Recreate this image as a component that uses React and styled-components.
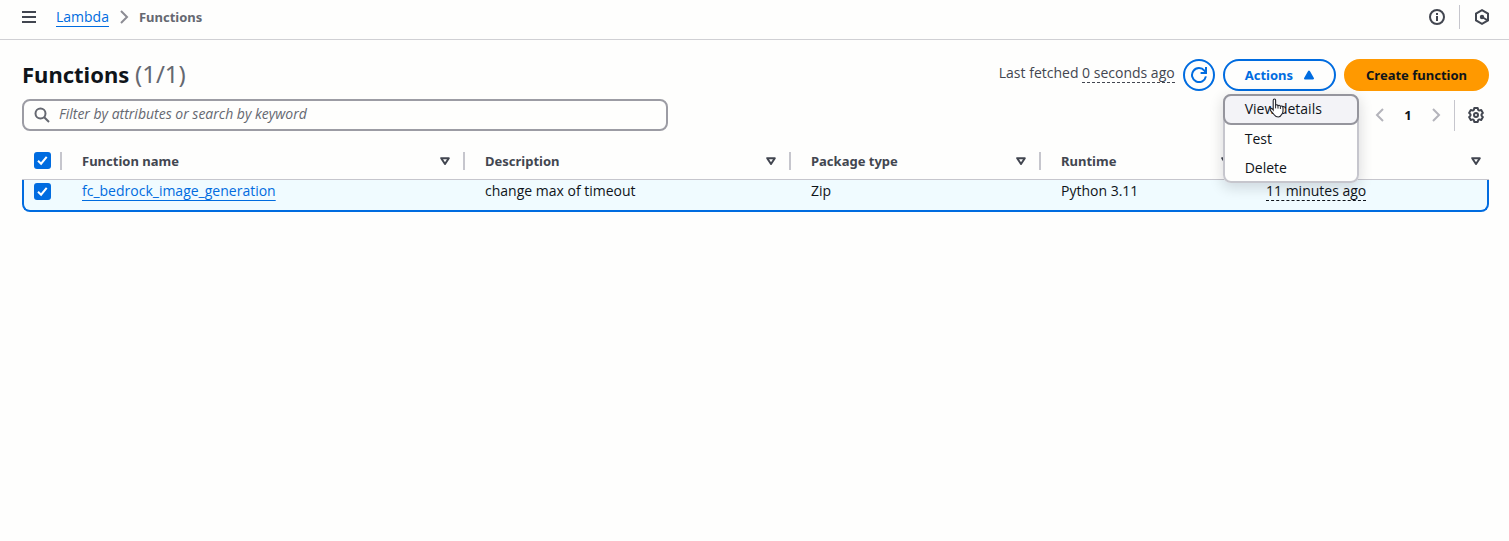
import React from "react";
import styled, { createGlobalStyle, css } from "styled-components";

const GlobalStyle = createGlobalStyle`
  * { box-sizing: border-box; }
  body {
    margin: 0;
    background: #fefefd;
    color: #16191f;
    font-family: "Open Sans", "Noto Sans", sans-serif;
    font-size: 14px;
    line-height: 20px;
  }
  button, input { font: inherit; color: inherit; }
`;

const BLUE = "#006ce0";

const strong = css`
  font-family: "Noto Sans", "Open Sans", sans-serif;
  font-size: 13px;
  font-weight: 700;
`;

const Icon = styled.svg`
  display: block;
  width: ${(p) => p.$size || 16}px;
  height: ${(p) => p.$size || 16}px;
  flex: none;
  fill: none;
  stroke: currentColor;
  stroke-width: 2;
`;

const IconButton = styled.button`
  display: flex;
  align-items: center;
  justify-content: center;
  padding: 0;
  border: 0;
  background: none;
  color: ${(p) => (p.$muted ? "#b4b4bb" : "#424650")};
  cursor: pointer;
`;

const TopBar = styled.header`
  display: flex;
  align-items: center;
  justify-content: space-between;
  height: 40px;
  padding: 0 19px 5px 21px;
  border-bottom: 1px solid #d0d0d4;
`;

const Breadcrumbs = styled.nav`
  display: flex;
  align-items: center;
  gap: 7px;
`;

const MenuToggle = styled(IconButton)`
  margin-right: 12px;
`;

const Link = styled.a`
  color: ${BLUE};
  text-decoration: underline;
  text-decoration-thickness: 1px;
  text-underline-offset: 4px;
`;

const Separator = styled.span`
  color: #8c8c94;
`;

const Current = styled.span`
  ${strong}
  color: #656871;
`;

const Tools = styled.div`
  display: flex;
  align-items: center;
  gap: 14px;
`;

const Rule = styled.span`
  width: 1px;
  height: ${(p) => p.$height}px;
  background: #c6c6cd;
`;

const Main = styled.main`
  padding: 19px 20px 0 22px;
`;

const Row = styled.div`
  display: flex;
  align-items: center;
  justify-content: space-between;
  height: 32px;
  margin-bottom: ${(p) => p.$gap || 0}px;
`;

const Title = styled.h1`
  margin: 0;
  font-family: "Noto Sans", "Open Sans", sans-serif;
  font-size: 22px;
  line-height: 28px;
  padding-bottom: 2px;
  font-weight: 700;
  color: #0f141a;
`;

const Count = styled.span`
  font-size: 24px;
  font-weight: 400;
  color: #656871;
`;

const ActionBar = styled.div`
  display: flex;
  align-items: center;
  gap: 8px;
`;

const Fetched = styled.span`
  padding-bottom: 4px;
  color: #424650;
`;

const Dashed = styled.span`
  border-bottom: 1px dashed currentColor;
`;

const Button = styled.button`
  ${strong}
  display: flex;
  align-items: center;
  justify-content: center;
  gap: 8px;
  height: 32px;
  padding: 0 20px;
  border: 2px solid ${BLUE};
  border-radius: 16px;
  background: #fefefd;
  color: ${BLUE};
  white-space: nowrap;
  cursor: pointer;
  ${(p) =>
    p.$round &&
    css`
      width: 32px;
      padding: 0;
    `}
  ${(p) =>
    p.$menu &&
    css`
      padding: 0 17px 0 20px;
    `}
  ${(p) =>
    p.$primary &&
    css`
      border-color: #ff9900;
      background: #ff9900;
      color: #0f141a;
    `}
`;

const Dropdown = styled.div`
  position: relative;
`;

const Menu = styled.ul`
  position: absolute;
  z-index: 2;
  top: 35px;
  left: 0;
  width: 136px;
  margin: 0;
  padding: 0;
  list-style: none;
  border-radius: 8px;
  background: #fefefd;
  box-shadow: inset 0 0 0 2px #c6c6cd, 0 4px 14px 1px rgba(0, 7, 22, 0.14);
`;

const MenuItem = styled.button`
  display: block;
  position: relative;
  width: 100%;
  height: 29px;
  padding: 0 20px 2px;
  border: 2px solid transparent;
  border-radius: 8px;
  background: none;
  line-height: 20px;
  text-align: left;
  color: #0f141a;
  cursor: pointer;
  ${(p) =>
    p.$active &&
    css`
      height: 31px;
      border-color: #95959d;
      background: #f3f3f7;
    `}
`;

const Pointer = styled.svg`
  position: absolute;
  top: 2px;
  left: 44px;
  width: 16px;
  height: 20px;
`;

const Search = styled.label`
  display: flex;
  align-items: center;
  gap: 9px;
  flex: 0 1 646px;
  height: 32px;
  padding: 0 10px;
  border: 2px solid #9c9ca4;
  border-radius: 8px;
  color: #656871;
`;

const SearchInput = styled.input`
  flex: 1;
  min-width: 0;
  padding: 0 0 2px;
  border: 0;
  outline: 0;
  background: none;
  &::placeholder {
    color: #656871;
    font-style: italic;
    opacity: 1;
  }
`;

const Pager = styled.div`
  display: flex;
  align-items: center;
  gap: 10px;
  padding-right: 5px;
`;

const Preferences = styled(IconButton)`
  margin-left: 3px;
`;

const Page = styled.button`
  ${strong}
  width: 20px;
  padding: 0;
  border: 0;
  background: none;
  color: #0f141a;
`;

const Table = styled.table`
  width: 100%;
  table-layout: fixed;
  border-collapse: separate;
  border-spacing: 0;
  text-align: left;
`;

const Col = styled.col`
  width: ${(p) => p.$width};
`;

const HeadCell = styled.th`
  ${strong}
  height: 38px;
  padding: 0;
  border-bottom: 1px solid #c6c6cd;
  color: #424650;
`;

const HeadInner = styled.div`
  display: flex;
  align-items: center;
  justify-content: ${(p) => (p.$last ? "flex-end" : "space-between")};
  height: 18px;
  padding: ${(p) => (p.$check ? "0 0 0 12px" : p.$last ? "0 5px 0 20px" : "0 10px 0 20px")};
  border-right: ${(p) => (p.$last ? 0 : 2)}px solid #c6c6cd;
`;

const Cell = styled.td`
  height: 32px;
  padding: ${(p) => (p.$check ? "0 0 8px 10px" : "0 0 8px 20px")};
  border-bottom: 2px solid ${BLUE};
  background: #f0fbff;
  color: #0f141a;
  &:first-child {
    border-left: 2px solid ${BLUE};
    border-bottom-left-radius: 8px;
  }
  &:last-child {
    border-right: 2px solid ${BLUE};
    border-bottom-right-radius: 8px;
  }
`;

const Check = styled.input`
  appearance: none;
  display: block;
  width: 17px;
  height: 17px;
  margin: 0;
  border-radius: 3px;
  background: ${BLUE};
`;

const CheckBox = styled.span`
  display: grid;
  width: 17px;
  > * {
    grid-area: 1 / 1;
  }
  svg {
    color: #fff;
    pointer-events: none;
  }
`;

function Tick({ label }) {
  return (
    <CheckBox>
      <Check type="checkbox" defaultChecked aria-label={label} />
      <Icon $size={17} viewBox="0 0 17 17">
        <path d="M4 8.7 7.1 11.7 12.7 4.8" />
      </Icon>
    </CheckBox>
  );
}

function Chevron({ left }) {
  return (
    <Icon viewBox="0 0 16 16">
      <path d={left ? "M11 2 5 8l6 6" : "M5 2l6 6-6 6"} />
    </Icon>
  );
}

const columns = ["Function name", "Description", "Package type", "Runtime"];

function SortButton({ label }) {
  return (
    <IconButton aria-label={"Sort by " + label}>
      <Icon viewBox="0 0 16 16">
        <path d="M4.2 5.200h7.600L8 11z" strokeLinejoin="round" />
      </Icon>
    </IconButton>
  );
}

export default function App() {
  return (
    <>
      <GlobalStyle />
      <TopBar>
        <Breadcrumbs aria-label="Breadcrumbs">
          <MenuToggle aria-label="Open navigation">
            <Icon viewBox="0 0 16 16">
              <path d="M1 3h14M1 8h14M1 13h14" />
            </Icon>
          </MenuToggle>
          <Link href="#lambda">Lambda</Link>
          <Separator>
            <Chevron />
          </Separator>
          <Current>Functions</Current>
        </Breadcrumbs>
        <Tools>
          <IconButton aria-label="Info">
            <Icon viewBox="0 0 16 16">
              <circle cx="8" cy="8" r="7" />
              <path d="M8 7v5M8 4v2" />
            </Icon>
          </IconButton>
          <Rule $height={24} />
          <IconButton aria-label="Tutorials">
            <Icon viewBox="0 0 16 16">
              <path d="M8 1.2 14 4.6v6.8L8 14.8 2 11.4V4.6z" />
              <circle cx="8" cy="8" r="2.2" fill="currentColor" stroke="none" />
              <path d="M8 8 13 11" />
            </Icon>
          </IconButton>
        </Tools>
      </TopBar>
      <Main>
        <Row $gap={8}>
          <Title>
            Functions <Count>(1/1)</Count>
          </Title>
          <ActionBar>
            <Fetched>
              Last fetched <Dashed>0 seconds ago</Dashed>
            </Fetched>
            <Button $round aria-label="Refresh">
              <Icon viewBox="0 0 16 16">
                <path d="M14.9 9.4A7 7 0 1 1 13.4 3.6L15 5.6" />
                <path d="M15 0v6H9.6" />
              </Icon>
            </Button>
            <Dropdown>
              <Button $menu aria-expanded="true">
                Actions
                <Icon viewBox="0 0 16 16">
                  <path d="M8 4.5 12 11.5H4z" fill="currentColor" strokeLinejoin="round" />
                </Icon>
              </Button>
              <Menu>
                <li>
                  <MenuItem $active>
                    View details
                    <Pointer viewBox="0 0 16 20">
                      <path
                        d="M4.2 12V2.6Q4.2 1 5.4 1T6.6 2.6V7.2Q7.8 6 9 7.6 10.2 6.6 11.4 8.2 13.8 7.4 14 10V13Q14 15 12.6 16.6 11.500 19 9.300 19 6.800 19 5.400 17L1.4 12.4Q.8 11 2 10.4 3 10.4 4.2 12z"
                        fill="#fff"
                        stroke="#23232b"
                        strokeWidth="1.1"
                      />
                      <path d="M6.6 7v3.4M9 7.6v3M11.4 8.2v2.8" stroke="#23232b" />
                    </Pointer>
                  </MenuItem>
                </li>
                <li>
                  <MenuItem>Test</MenuItem>
                </li>
                <li>
                  <MenuItem>Delete</MenuItem>
                </li>
              </Menu>
            </Dropdown>
            <Button $primary>Create function</Button>
          </ActionBar>
        </Row>
        <Row $gap={11}>
          <Search>
            <Icon viewBox="0 0 16 16">
              <circle cx="6.5" cy="6.5" r="5" />
              <path d="M10.2 10.2 15 15" />
            </Icon>
            <SearchInput placeholder="Filter by attributes or search by keyword" aria-label="Filter functions" />
          </Search>
          <Pager>
            <IconButton $muted aria-label="Previous page">
              <Chevron left />
            </IconButton>
            <Page>1</Page>
            <IconButton $muted aria-label="Next page">
              <Chevron />
            </IconButton>
            <Rule $height={31} />
            <Preferences aria-label="Preferences">
              <Icon viewBox="0 0 16 16">
                <path
                  d="M6.3 1h3.4l.5 2 1 .6 2-.6 1.7 2.9L13.500 7.400v1.200l1.400 1.500-1.700 2.900-2-.6-1 .6-.5 2H6.300l-.5-2-1-.6-2 .6-1.700-2.900L2.500 8.600V7.400L1.100 5.900 2.800 3l2 .6 1-.6z"
                  strokeLinejoin="round"
                />
                <circle cx="8" cy="8" r="2" />
              </Icon>
            </Preferences>
          </Pager>
        </Row>
        <Table>
          <colgroup>
            <Col $width="40px" />
            <Col $width="403px" />
            <Col $width="326px" />
            <Col $width="250px" />
            <Col $width="205px" />
            <Col $width="auto" />
          </colgroup>
          <thead>
            <tr>
              <HeadCell>
                <HeadInner $check>
                  <Tick label="Select all functions" />
                </HeadInner>
              </HeadCell>
              {columns.map((name) => (
                <HeadCell key={name}>
                  <HeadInner>
                    {name}
                    <SortButton label={name} />
                  </HeadInner>
                </HeadCell>
              ))}
              <HeadCell aria-label="Last modified">
                <HeadInner $last>
                  <SortButton label="Last modified" />
                </HeadInner>
              </HeadCell>
            </tr>
          </thead>
          <tbody>
            <tr>
              <Cell $check>
                <Tick label="Select fc_bedrock_image_generation" />
              </Cell>
              <Cell>
                <Link href="#function">fc_bedrock_image_generation</Link>
              </Cell>
              <Cell>change max of timeout</Cell>
              <Cell>Zip</Cell>
              <Cell>Python 3.11</Cell>
              <Cell>
                <Dashed>11 minutes ago</Dashed>
              </Cell>
            </tr>
          </tbody>
        </Table>
      </Main>
    </>
  );
}
